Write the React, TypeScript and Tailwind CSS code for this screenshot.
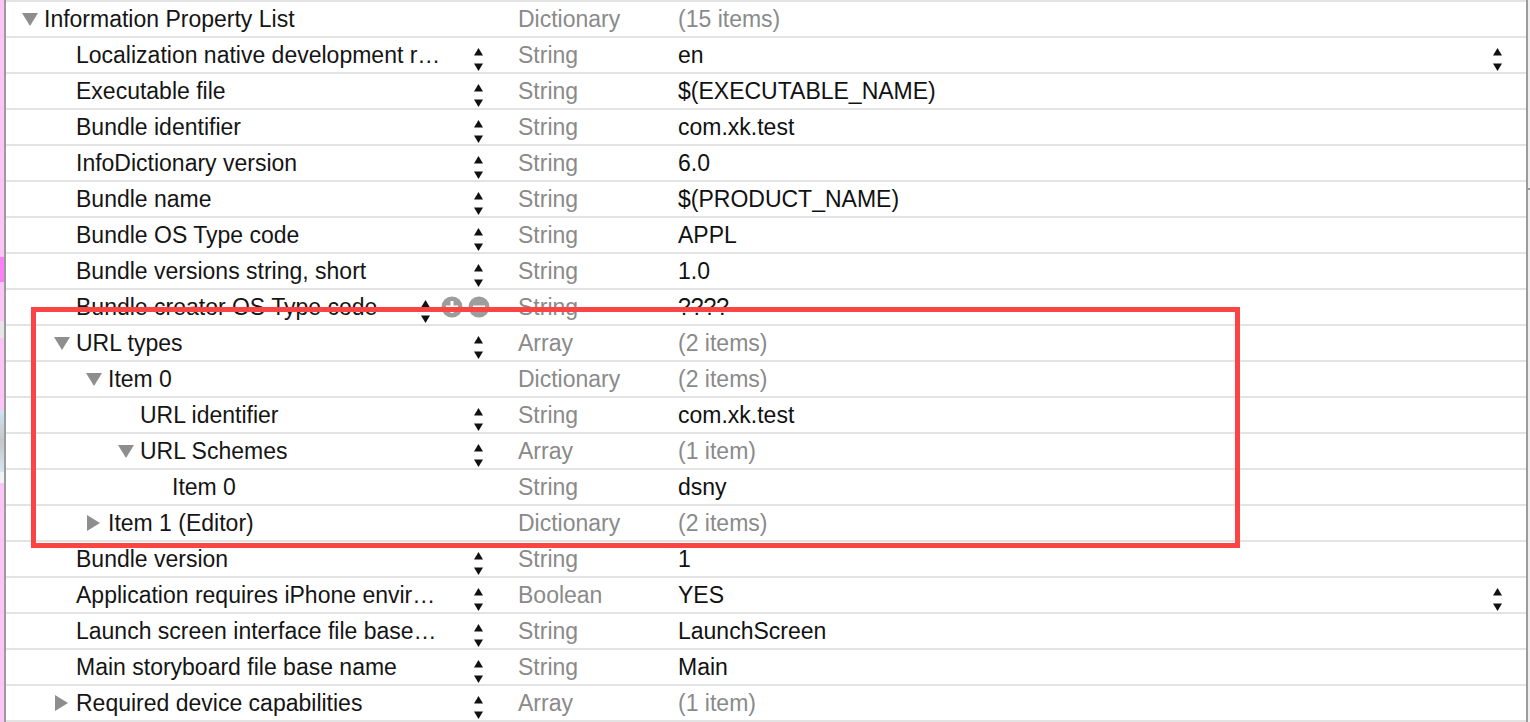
import React from "react";

type Row = {
    key: string;
    level: number;
    disclosure?: "open" | "closed";
    stepper?: boolean;
    editing?: boolean;
    type: string;
    value: string;
    muted?: boolean;
    rightStepper?: boolean;
};

const rows: Row[] = [
    { key: "Information Property List", level: 0, disclosure: "open", type: "Dictionary", value: "(15 items)", muted: true },
    { key: "Localization native development r…", level: 1, stepper: true, type: "String", value: "en", rightStepper: true },
    { key: "Executable file", level: 1, stepper: true, type: "String", value: "$(EXECUTABLE_NAME)" },
    { key: "Bundle identifier", level: 1, stepper: true, type: "String", value: "com.xk.test" },
    { key: "InfoDictionary version", level: 1, stepper: true, type: "String", value: "6.0" },
    { key: "Bundle name", level: 1, stepper: true, type: "String", value: "$(PRODUCT_NAME)" },
    { key: "Bundle OS Type code", level: 1, stepper: true, type: "String", value: "APPL" },
    { key: "Bundle versions string, short", level: 1, stepper: true, type: "String", value: "1.0" },
    { key: "Bundle creator OS Type code", level: 1, editing: true, type: "String", value: "????" },
    { key: "URL types", level: 1, disclosure: "open", stepper: true, type: "Array", value: "(2 items)", muted: true },
    { key: "Item 0", level: 2, disclosure: "open", type: "Dictionary", value: "(2 items)", muted: true },
    { key: "URL identifier", level: 3, stepper: true, type: "String", value: "com.xk.test" },
    { key: "URL Schemes", level: 3, disclosure: "open", stepper: true, type: "Array", value: "(1 item)", muted: true },
    { key: "Item 0", level: 4, type: "String", value: "dsny" },
    { key: "Item 1 (Editor)", level: 2, disclosure: "closed", type: "Dictionary", value: "(2 items)", muted: true },
    { key: "Bundle version", level: 1, stepper: true, type: "String", value: "1" },
    { key: "Application requires iPhone envir…", level: 1, stepper: true, type: "Boolean", value: "YES", rightStepper: true },
    { key: "Launch screen interface file base…", level: 1, stepper: true, type: "String", value: "LaunchScreen" },
    { key: "Main storyboard file base name", level: 1, stepper: true, type: "String", value: "Main" },
    { key: "Required device capabilities", level: 1, disclosure: "closed", stepper: true, type: "Array", value: "(1 item)", muted: true },
];

const indent = ["pl-[16px]", "pl-[48px]", "pl-[80px]", "pl-[112px]", "pl-[144px]"];

const Stepper = () => (
    <svg width="11" height="34" viewBox="0 0 11 34" className="shrink-0">
        <polygon points="1,17.5 5.5,10 10,17.5" fill="#111" />
        <polygon points="1,25.5 10,25.5 5.5,33" fill="#111" />
    </svg>
);

const Disclosure = ({ open }: { open: boolean }) =>
    open ? (
        <svg width="16" height="14" viewBox="0 0 16 14">
            <polygon points="0,1 16,1 8,14" fill="#8e8e8e" />
        </svg>
    ) : (
        <svg width="15" height="16" viewBox="0 0 15 16">
            <polygon points="1,0 14,8 1,16" fill="#8e8e8e" />
        </svg>
    );

const RoundButton = ({ minus }: { minus?: boolean }) => (
    <svg width="22" height="22" viewBox="0 0 22 22" className="shrink-0">
        <circle cx="11" cy="11" r="10.5" fill="#9d9d9d" />
        <rect x="5" y="9.5" width="12" height="3" fill="#fff" />
        {!minus && <rect x="9.5" y="5" width="3" height="12" fill="#fff" />}
    </svg>
);

const PlistRow = ({ row }: { row: Row }) => (
    <div className="flex h-[36px] items-center border-t-2 border-[#e3e3e3]">
        <div className={`flex items-center ${indent[row.level]} ${row.editing ? "w-[414px]" : "w-[466px]"} shrink-0`}>
            <div className="flex w-[22px] shrink-0 items-center">
                {row.disclosure && <Disclosure open={row.disclosure === "open"} />}
            </div>
            <span className="whitespace-nowrap leading-[28px] text-[#151515]">{row.key}</span>
        </div>
        {row.editing ? (
            <div className="flex w-[98px] shrink-0 items-center">
                <Stepper />
                <div className="ml-[10px] flex items-center gap-[5px]">
                    <RoundButton />
                    <RoundButton minus />
                </div>
            </div>
        ) : (
            <div className="flex w-[46px] shrink-0 items-center pl-[1px]">{row.stepper && <Stepper />}</div>
        )}
        <div className="w-[160px] shrink-0 whitespace-nowrap leading-[28px] text-[#8a8a8a]">{row.type}</div>
        <div className="flex flex-1 items-center">
            <span className={`whitespace-nowrap leading-[28px] ${row.muted ? "text-[#8a8a8a]" : "text-[#111]"}`}>{row.value}</span>
            {row.rightStepper && (
                <div className="ml-auto mr-[23px] flex">
                    <Stepper />
                </div>
            )}
        </div>
    </div>
);

const App = () => {
    return (
        <div
            className="flex h-[722px] w-[1530px] overflow-hidden bg-white text-[23px]"
            style={{ fontFamily: '"Liberation Sans", Arial, sans-serif' }}
        >
            {/* window edge behind the editor */}
            <div className="flex w-[4px] shrink-0 flex-col">
                <div className="h-[257px] bg-[#fbc6f7]" />
                <div className="h-[25px] bg-[#fd7ff6]" />
                <div className="h-[39px] bg-[#fbc6f7]" />
                <div className="h-[17px] bg-[#e6e6e6]" />
                <div className="h-[72px] bg-[#fbc6f7]" />
                <div className="h-[62px] bg-gradient-to-b from-[#cfe3f5] via-[#c6c6c6] to-[#d6e6f4]" />
                <div className="h-[11px] bg-[#f3f3f3]" />
                <div className="flex-1 bg-[#fbc6f7]" />
            </div>
            <div className="w-[2px] shrink-0 bg-[#9b9b9b]" />

            <div className="relative w-[1520px] shrink-0">
                {rows.map((row, i) => (
                    <PlistRow key={i} row={row} />
                ))}
                <div className="h-[2px] bg-[#e3e3e3]" />

                <div className="pointer-events-none absolute left-[25px] top-[307px] h-[241px] w-[1209px] border-[5px] border-[#fb4444]" />
            </div>

            <div className="w-[2px] shrink-0 bg-[#9b9b9b]" />
            <div className="flex w-[2px] shrink-0 flex-col bg-[#efefef]">
                <div className="h-[188px]" />
                <div className="h-[2px] bg-[#9b9b9b]" />
            </div>
        </div>
    );
};

export default App;
